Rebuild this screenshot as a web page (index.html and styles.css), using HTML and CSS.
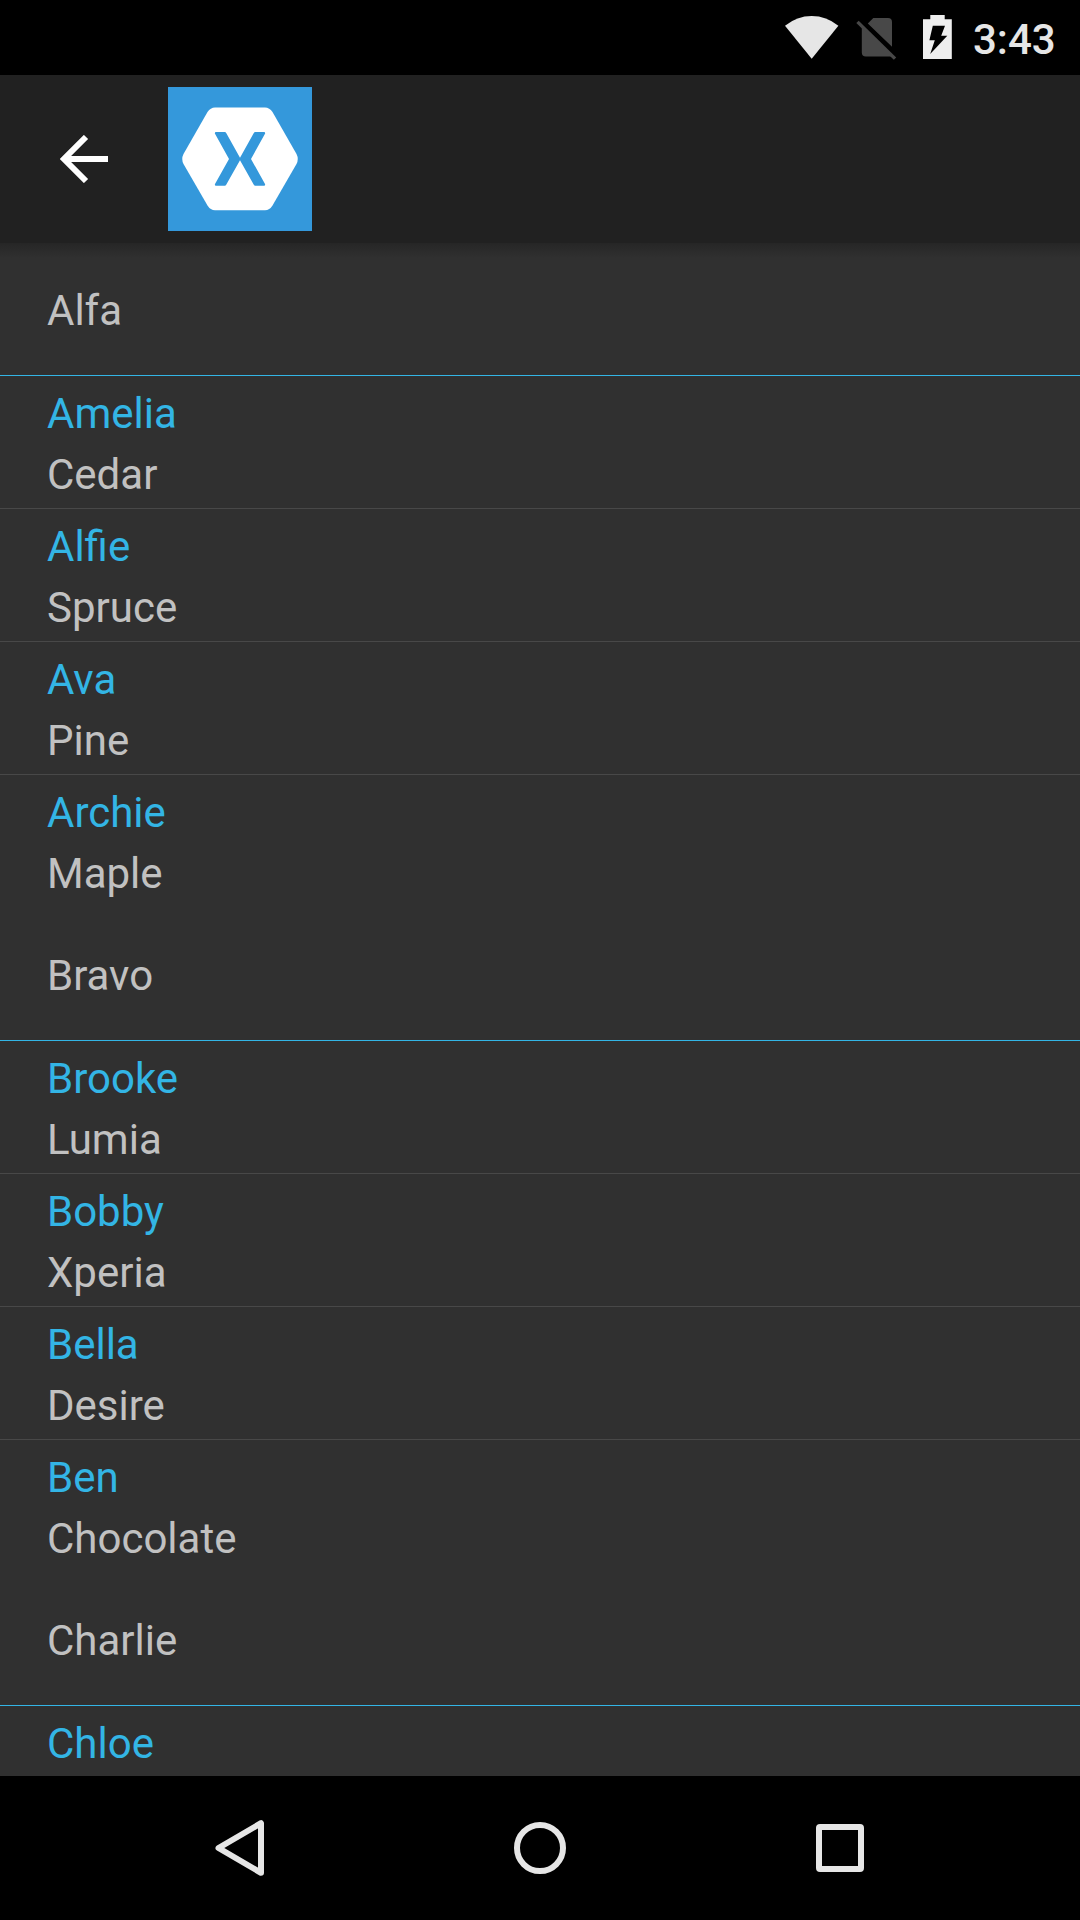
FILE: index.html
```html
<!DOCTYPE html>
<html lang="en">
<head>
<meta charset="utf-8">
<title>Contacts</title>
<link rel="stylesheet" href="styles.css">
</head>
<body>
<div class="screen">
  <div class="status-bar">
    <svg class="wifi" width="54" height="43" viewBox="0 0 54 43"><path fill="#e6e6e6" d="M0 9.7Q12 0 26.7 0T53.4 9.7L26.7 42.7Z"/></svg>
    <svg class="sim" width="41" height="43" viewBox="0 0 41 43"><path fill="#484848" d="M11.8 5.5L17.3 0H32a4 4 0 0 1 4 4V28.8ZM5.8 9L36 38.6H9.8a4 4 0 0 1-4-4Z"/><path stroke="#484848" stroke-width="3.4" d="M1.5 3.9L39 40.6"/></svg>
    <svg class="battery" width="29" height="44" viewBox="0 0 29 44"><path fill="#eee" d="M7.3 0H21.7V4.2H28.8V44H0V4.2H7.3Z"/><path d="M9.8 10.8H22L18.2 20.8H24.3L7.2 39L11.8 25.2H6.4Z"/></svg>
    <span class="clock">3:43</span>
  </div>
  <header class="app-bar">
    <svg class="back" width="48" height="48" viewBox="0 0 48 48"><path fill="none" stroke="#fff" stroke-width="6" d="M48 24H5M26 2L4 24L26 46"/></svg>
    <svg class="logo" width="144" height="144" viewBox="0 0 144 144"><path fill="#3498db" d="M0 0H144V144H0Z"/><path fill="#fff" d="M47 20.5H97Q101.500 20.500 104.500 25L128.500 67Q131 72 128.500 77L104.500 118.500Q101.500 123.300 97 123.300H47Q42.500 123.300 39.500 118.500L15.500 77Q13 72 15.500 67L39.500 25Q42.500 20.500 47 20.500Z"/><path fill="#3498db" d="M48 45H56.700Q57.700 45 58.200 46L72 70.700L85.800 46Q86.300 45 87.300 45H96Q97.600 45 97 46.800L83 72L97 97Q97.600 98.800 96 98.800H87.300Q86.300 98.800 85.800 97.800L72 73.300L58.200 97.800Q57.700 98.800 56.700 98.800H48Q46.400 98.800 47 97L61 72L47 46.800Q46.400 45 48 45Z"/></svg>
  </header>
  <main class="list">
    <section class="group">
      <h2 class="group-title">Alfa</h2>
      <div class="row"><div class="name">Amelia</div><div class="detail">Cedar</div></div>
      <div class="row"><div class="name">Alfie</div><div class="detail">Spruce</div></div>
      <div class="row"><div class="name">Ava</div><div class="detail">Pine</div></div>
      <div class="row"><div class="name">Archie</div><div class="detail">Maple</div></div>
    </section>
    <section class="group">
      <h2 class="group-title">Bravo</h2>
      <div class="row"><div class="name">Brooke</div><div class="detail">Lumia</div></div>
      <div class="row"><div class="name">Bobby</div><div class="detail">Xperia</div></div>
      <div class="row"><div class="name">Bella</div><div class="detail">Desire</div></div>
      <div class="row"><div class="name">Ben</div><div class="detail">Chocolate</div></div>
    </section>
    <section class="group">
      <h2 class="group-title">Charlie</h2>
      <div class="row"><div class="name">Chloe</div></div>
    </section>
  </main>
  <nav class="nav-bar">
    <svg width="144" height="144" viewBox="0 0 144 144"><path fill="none" stroke="#e6e6e6" stroke-width="6" stroke-linejoin="round" d="M93 47.200V96.800L50.500 72Z"/></svg>
    <svg width="144" height="144" viewBox="0 0 144 144"><circle cx="72" cy="72" r="23" fill="none" stroke="#e6e6e6" stroke-width="6"/></svg>
    <svg width="144" height="144" viewBox="0 0 144 144"><path fill="#e6e6e6" fill-rule="evenodd" d="M52 48H92Q96 48 96 52V92Q96 96 92 96H52Q48 96 48 92V52Q48 48 52 48ZM54 54V90H90V54Z"/></svg>
  </nav>
</div>
</body>
</html>
```
FILE: styles.css
```css
* {
  box-sizing: border-box;
}

body {
  margin: 0;
  background: #000;
  font-family: Roboto, sans-serif;
  font-size: 42px;
}

svg {
  display: block;
  flex: none;
}

.screen {
  display: flex;
  flex-direction: column;
  width: 1080px;
  height: 1920px;
  overflow: hidden;
}

.status-bar {
  display: flex;
  flex: none;
  justify-content: flex-end;
  height: 75px;
  padding: 15px 24px 0 0;
  background: #000;
}

.wifi {
  margin: 1px 17px 0 0;
}

.sim {
  margin: 3px 26px 0 0;
}

.battery {
  margin-right: 21px;
}

.clock {
  width: 83px;
  line-height: 49px;
  font-weight: 500;
  color: #e6e6e6;
}

.app-bar {
  display: flex;
  flex: none;
  align-items: center;
  gap: 60px;
  height: 168px;
  padding-left: 60px;
  background: #212121;
}

.list {
  flex: 1;
  min-height: 0;
  overflow: hidden;
  background: #303030 linear-gradient(#262626, #303030) no-repeat 0 0 / 100% 15px;
}

.group-title {
  height: 133px;
  margin: 0;
  padding: 2px 47px 0;
  border-bottom: 1px solid #33b5e5;
  font-size: 42px;
  font-weight: 400;
  line-height: 132px;
  color: #c1c1c1;
}

.row {
  height: 133px;
  padding: 7px 47px 0;
  border-bottom: 1px solid #484848;
  line-height: 61px;
}

.row:last-child {
  border-bottom-color: transparent;
}

.name {
  color: #33b5e5;
}

.detail {
  color: #c1c1c1;
}

.nav-bar {
  display: flex;
  flex: none;
  justify-content: center;
  gap: 156px;
  height: 144px;
  background: #000;
}
```
